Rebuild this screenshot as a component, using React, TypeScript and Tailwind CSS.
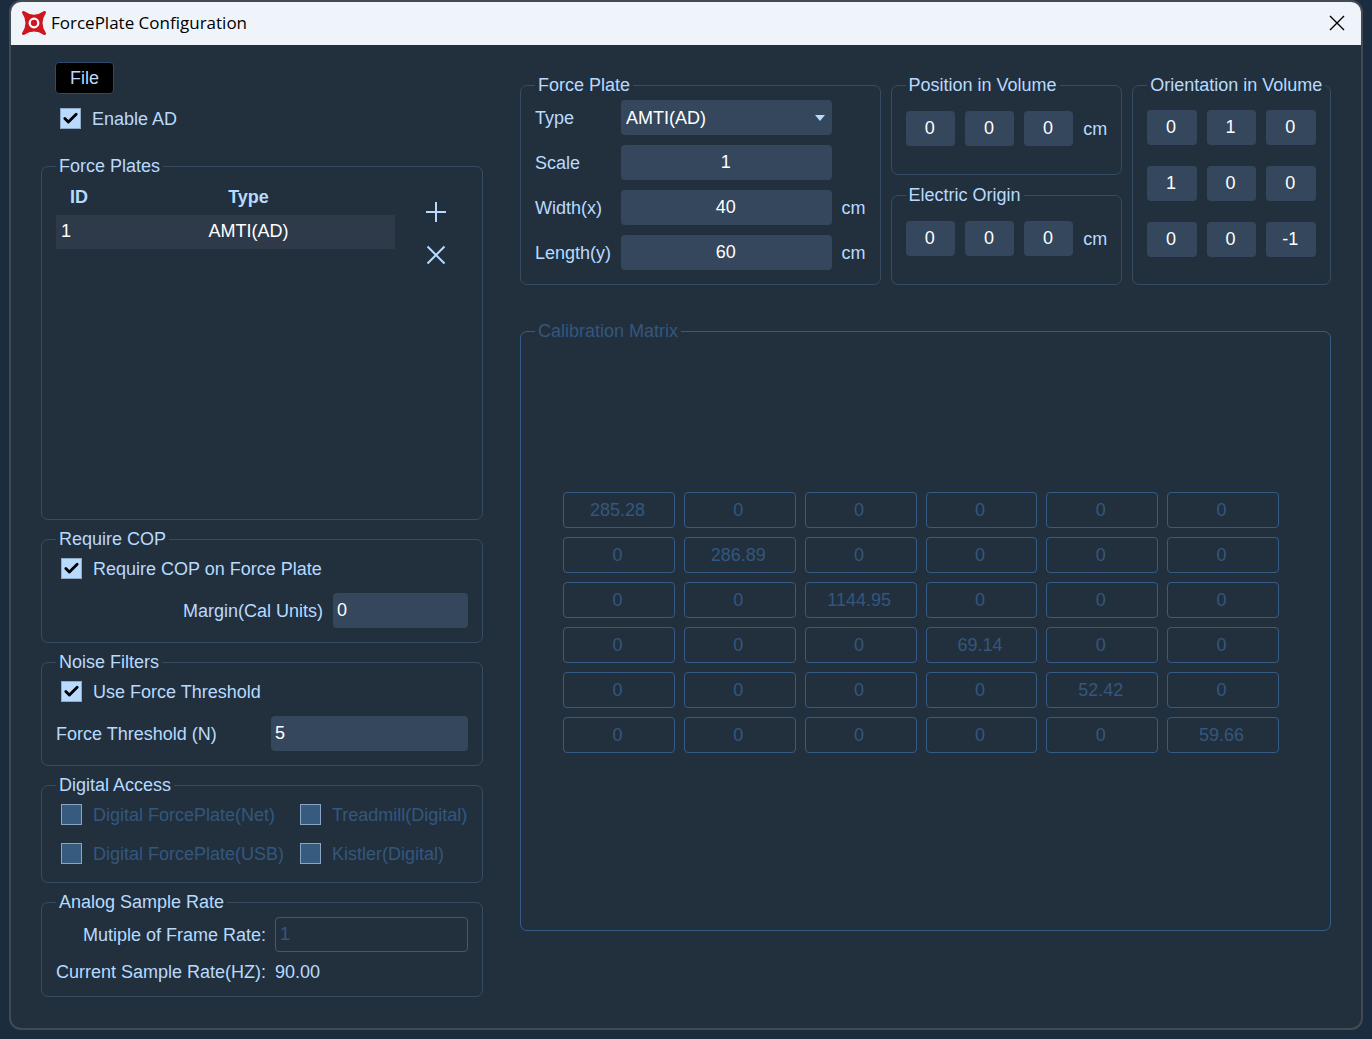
import type { ReactNode } from 'react';
import { Check } from 'lucide-react';

const calibration = [285.28, 286.89, 1144.95, 69.14, 52.42, 59.66];

const orientation = [
  [0, 1, 0],
  [1, 0, 0],
  [0, 0, -1],
];

const axes = ['x', 'y', 'z'];

const inputClass = 'h-[35px] w-full min-w-0 rounded-[4px] bg-[#34475c] text-white outline-none';

function Group({ title, className = '', disabled = false, children }: { title: string; className?: string; disabled?: boolean; children: ReactNode }) {
  return (
    <fieldset
      disabled={disabled}
      className={`min-w-0 rounded-[7px] border px-[14px] ${disabled ? 'border-[#355c86] text-[#33577d]' : 'border-[#374c61]'} ${className}`}
    >
      <legend className="px-[3px] leading-5">{title}</legend>
      {children}
    </fieldset>
  );
}

function CheckField({ label, checked = false, disabled = false }: { label: string; checked?: boolean; disabled?: boolean }) {
  return (
    <label className={`flex items-center gap-[11px] leading-5 whitespace-nowrap ${disabled ? 'text-[#33577d]' : ''}`}>
      <span className="grid shrink-0">
        <input
          type="checkbox"
          defaultChecked={checked}
          disabled={disabled}
          className="peer col-start-1 row-start-1 size-[21px] appearance-none border border-[#88a5c8] bg-[#375a7f] checked:border-[#8fa9c6] checked:bg-[#b8daff]"
        />
        <Check className="pointer-events-none col-start-1 row-start-1 hidden size-[17px] place-self-center text-black peer-checked:block" strokeWidth={4} />
      </span>
      {label}
    </label>
  );
}

/* tres valores x, y, z con su unidad */
function VectorInputs({ name }: { name: string }) {
  return (
    <div className="flex items-center gap-[10px] pt-4">
      {axes.map((axis) => (
        <input key={axis} aria-label={`${name} ${axis}`} defaultValue="0" className={`${inputClass} pr-px text-center`} />
      ))}
      <span className="w-6 shrink-0">cm</span>
    </div>
  );
}

function TitleBar() {
  return (
    <header className="flex h-[43px] items-center bg-[#eef4f9] pr-[14px] pb-[2px] pl-[11px] text-black">
      <svg viewBox="0 0 24 24" className="size-6" aria-hidden="true">
        <path
          d="M1.5 1.5 Q12 9 22.5 1.5 Q15.5 12 22.5 22.5 Q12 15.5 1.5 22.5 Q8.5 12 1.5 1.5 Z"
          fill="#cf1520"
          stroke="#cf1520"
          strokeWidth="3"
          strokeLinejoin="round"
        />
        <circle cx="12" cy="12" r="4.3" fill="none" stroke="#fff" strokeWidth="2.3" />
      </svg>
      <h1 className="ml-[5px] flex-1 font-['Open_Sans','Noto_Sans',sans-serif] text-[17px] leading-6">ForcePlate Configuration</h1>
      <button type="button" aria-label="Close" className="grid size-5 place-items-center">
        <svg viewBox="0 0 16 16" className="size-4" fill="none" stroke="currentColor" strokeWidth="1.4">
          <path d="M1 1 15 15 M15 1 1 15" />
        </svg>
      </button>
    </header>
  );
}

function PlateList() {
  return (
    <Group title="Force Plates">
      <div className="flex h-[343px] items-start">
        <table className="flex-1 table-fixed">
          <thead className="block">
            <tr className="flex h-[39px] items-center pt-[2px] font-bold">
              <th className="w-[46px]">ID</th>
              <th className="flex-1">Type</th>
            </tr>
          </thead>
          <tbody className="block">
            <tr className="flex h-[34px] items-center bg-[#2e3a4a] pb-[2px] text-white">
              <td className="w-[46px] pl-[5px]">1</td>
              <td className="flex-1 text-center">AMTI(AD)</td>
            </tr>
          </tbody>
        </table>
        <div className="flex flex-col gap-[19px] pt-6 pl-[29px] pr-5">
          <button type="button" aria-label="Add force plate" className="grid size-6 place-items-center">
            <svg viewBox="0 0 20 20" className="size-5" stroke="currentColor" strokeWidth="2">
              <path d="M10 0V20M0 10H20" />
            </svg>
          </button>
          <button type="button" aria-label="Remove force plate" className="grid size-6 place-items-center">
            <svg viewBox="0 0 20 20" className="size-5" stroke="currentColor" strokeWidth="2">
              <path d="M1.5 1.5 18.5 18.5M18.5 1.5 1.5 18.5" />
            </svg>
          </button>
        </div>
      </div>
    </Group>
  );
}

export default function App() {
  return (
    <div className="flex min-h-screen bg-[#1b2c3f] px-[9px] pb-[9px] font-['Liberation_Sans',Arial,sans-serif] text-[18px] leading-5 text-[#b8daff]">
      <div className="flex-1 overflow-hidden rounded-xl border-2 border-[#434a52] bg-[#22303e]">
        <TitleBar />
        <main className="grid grid-cols-[442px_1fr] gap-[37px] pt-[17px] pr-[30px] pb-[30px] pl-[30px]">
          <div className="flex flex-col">
            <button type="button" className="ml-[14px] h-8 w-[59px] rounded-[4px] border border-[#2c4a6b] bg-black">
              File
            </button>
            <div className="mt-[14px] mb-[27px] pl-[19px]">
              <CheckField label="Enable AD" checked />
            </div>

            <div className="flex flex-col gap-[9px]">
              <PlateList />

              <Group title="Require COP" className="pb-[14px]">
                <div className="flex flex-col gap-[14px] pt-[9px]">
                  <div className="pl-[5px]">
                    <CheckField label="Require COP on Force Plate" checked />
                  </div>
                  <div className="flex items-center justify-end gap-[10px]">
                    <label htmlFor="margin">Margin(Cal Units)</label>
                    <div className="w-[135px]">
                      <input id="margin" defaultValue="0" className={`${inputClass} px-1`} />
                    </div>
                  </div>
                </div>
              </Group>

              <Group title="Noise Filters" className="pb-[14px]">
                <div className="flex flex-col gap-[14px] pt-[9px]">
                  <div className="pl-[5px]">
                    <CheckField label="Use Force Threshold" checked />
                  </div>
                  <div className="flex items-center justify-between">
                    <label htmlFor="threshold">Force Threshold (N)</label>
                    <div className="w-[197px]">
                      <input id="threshold" defaultValue="5" className={`${inputClass} px-1`} />
                    </div>
                  </div>
                </div>
              </Group>

              <Group title="Digital Access" className="pb-[18px]">
                <div className="grid grid-cols-[239px_1fr] gap-y-[18px] pt-[9px] pl-[5px]">
                  <CheckField label="Digital ForcePlate(Net)" disabled />
                  <CheckField label="Treadmill(Digital)" disabled />
                  <CheckField label="Digital ForcePlate(USB)" disabled />
                  <CheckField label="Kistler(Digital)" disabled />
                </div>
              </Group>

              <Group title="Analog Sample Rate" className="pb-[14px]">
                <div className="grid grid-cols-[210px_1fr] items-center gap-x-[9px] gap-y-[10px] pt-[5px] whitespace-nowrap">
                  <label htmlFor="multiple" className="text-right">Mutiple of Frame Rate:</label>
                  <input id="multiple" defaultValue="1" disabled className="h-[35px] w-full min-w-0 rounded-[4px] border border-[#355c86] px-1 text-[#33577d]" />
                  <span className="text-right">Current Sample Rate(HZ):</span>
                  <output>90.00</output>
                </div>
              </Group>
            </div>
          </div>

          <div className="flex min-w-0 flex-col gap-9 pt-[13px]">
            <div className="grid grid-cols-[361fr_232fr_199fr] gap-[10px]">
              <Group title="Force Plate" className="pb-[14px]">
                <div className="grid grid-cols-[76px_1fr_24px] items-center gap-[10px] pt-[5px]">
                  <label htmlFor="type">Type</label>
                  <div className="grid items-center">
                    <select id="type" className={`${inputClass} col-start-1 row-start-1 appearance-none px-[5px]`}>
                      <option>AMTI(AD)</option>
                    </select>
                    <svg viewBox="0 0 10 6" className="pointer-events-none col-start-1 row-start-1 mr-[7px] h-[6px] w-[10px] justify-self-end" fill="currentColor">
                      <path d="M0 0H10L5 6Z" />
                    </svg>
                  </div>
                  <span />
                  <label htmlFor="scale">Scale</label>
                  <input id="scale" defaultValue="1" className={`${inputClass} pr-px text-center`} />
                  <span />
                  <label htmlFor="width">Width(x)</label>
                  <input id="width" defaultValue="40" className={`${inputClass} pr-px text-center`} />
                  <span>cm</span>
                  <label htmlFor="length">Length(y)</label>
                  <input id="length" defaultValue="60" className={`${inputClass} pr-px text-center`} />
                  <span>cm</span>
                </div>
              </Group>

              <div className="flex flex-col gap-[10px]">
                <Group title="Position in Volume" className="pb-7">
                  <VectorInputs name="Position" />
                </Group>
                <Group title="Electric Origin" className="pb-7">
                  <VectorInputs name="Electric origin" />
                </Group>
              </div>

              <Group title="Orientation in Volume" className="whitespace-nowrap">
                <div className="grid grid-cols-3 gap-x-[10px] gap-y-[21px] pt-[15px]">
                  {orientation.map((row, r) =>
                    row.map((value, c) => (
                      <input key={`${r}-${c}`} aria-label={`Orientation ${r + 1},${c + 1}`} defaultValue={value} className={`${inputClass} pr-[2px] text-center`} />
                    ))
                  )}
                </div>
              </Group>
            </div>

            <Group title="Calibration Matrix" disabled>
              <div className="grid grid-cols-6 gap-[9px] pt-[151px] pr-[37px] pb-[177px] pl-7">
                {calibration.map((diagonal, r) =>
                  calibration.map((_, c) => (
                    <input
                      key={`${r}-${c}`}
                      aria-label={`Calibration ${r + 1},${c + 1}`}
                      defaultValue={r === c ? diagonal : 0}
                      className="h-9 w-full min-w-0 rounded-[4px] border border-[#355c86] pr-[3px] text-center text-[#33577d]"
                    />
                  ))
                )}
              </div>
            </Group>
          </div>
        </main>
      </div>
    </div>
  );
}
